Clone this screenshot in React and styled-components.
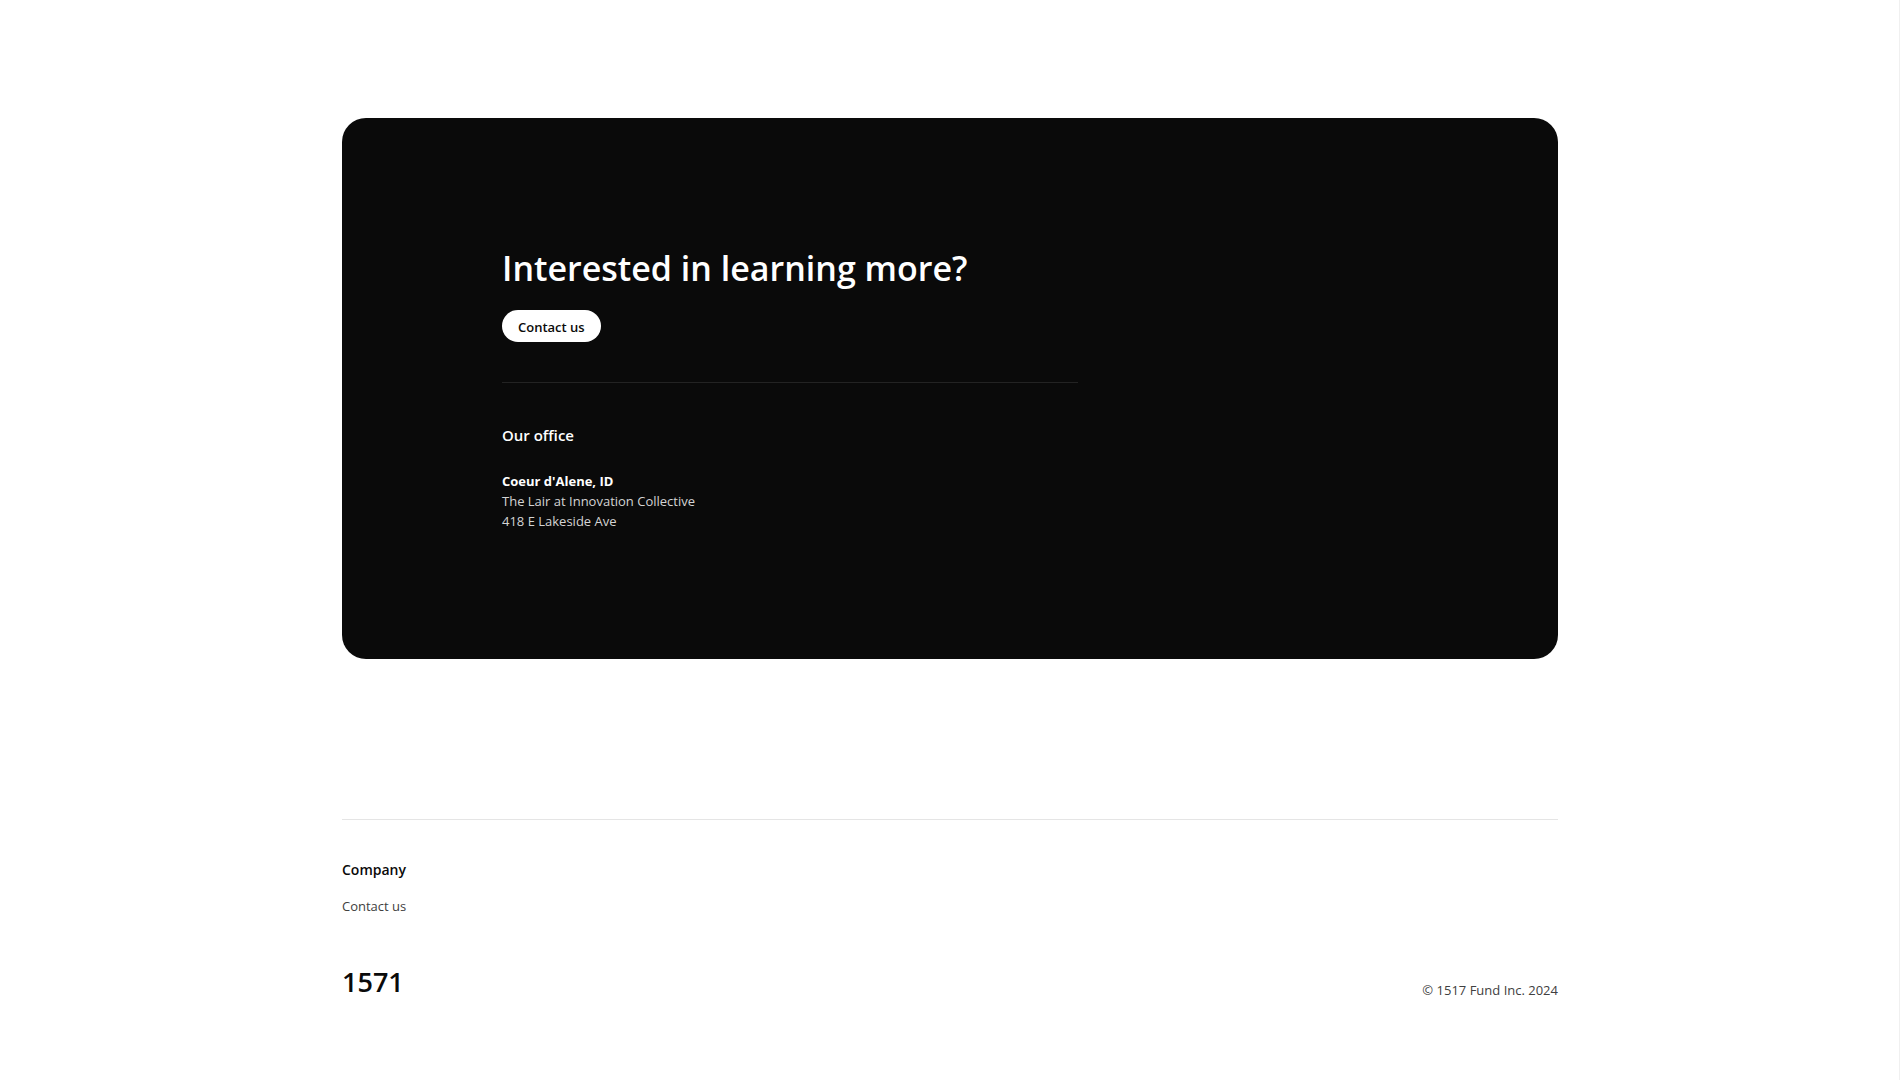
import React from "react";
import styled, { createGlobalStyle } from "styled-components";

const GlobalStyle = createGlobalStyle`
  *, *::before, *::after { box-sizing: border-box; }
  body {
    margin: 0;
    background: #fff;
    color: #0a0a0a;
    font-family: "Segoe UI", "Open Sans", "Noto Sans", sans-serif;
    font-size: 13px;
    line-height: 20px;
  }
  h2, h3, p, ul, address { margin: 0; }
`;

const Page = styled.div`
  min-height: 100vh;
  padding-top: 118px;
  box-shadow: inset -1px 0 #f0f0f0;
`;

const Container = styled.div`
  max-width: 1280px;
  margin: 0 auto;
  padding: 0 32px;
`;

const ContactCard = styled.section`
  padding: 128px 32px;
  border-radius: 24px;
  background: #0a0a0a;
  color: #fff;
`;

const CardInner = styled.div`
  max-width: 896px;
  margin: 0 auto;
`;

const CardContent = styled.div`
  max-width: 576px;
`;

const Title = styled.h2`
  font-size: 34px;
  font-weight: 600;
  line-height: 44px;
`;

const PillButton = styled.button`
  display: block;
  height: 32px;
  margin-top: 20px;
  padding: 2px 16px 0;
  border: 0;
  border-radius: 16px;
  background: #fff;
  color: #0a0a0a;
  font: inherit;
  font-weight: 600;
  cursor: pointer;
`;

const Office = styled.div`
  margin-top: 40px;
  padding-top: 40px;
  border-top: 1px solid #232323;
`;

const OfficeTitle = styled.h3`
  font-size: 15px;
  font-weight: 600;
  line-height: 24px;
`;

const Address = styled.address`
  margin-top: 24px;
  color: #d4d4d4;
  font-style: normal;

  strong {
    display: block;
    color: #fff;
    font-weight: 700;
  }
`;

const Footer = styled.footer`
  margin-top: 160px;
  padding: 40px 0 64px;
  border-top: 1px solid #e5e5e5;
`;

const FooterTitle = styled.h3`
  font-size: 14px;
  font-weight: 600;
  line-height: 20px;
`;

const LinkList = styled.ul`
  margin-top: 16px;
  padding: 0;
  list-style: none;
`;

const FooterLink = styled.a`
  color: #404040;
  text-decoration: none;
`;

const FooterBottom = styled.div`
  display: flex;
  align-items: flex-end;
  justify-content: space-between;
  margin-top: 48px;
`;

const Logo = styled.a`
  color: #0a0a0a;
  font-size: 27px;
  font-weight: 600;
  line-height: 36px;
  text-decoration: none;
`;

const Copyright = styled.p`
  color: #404040;
`;

export default function App() {
  return (
    <>
      <GlobalStyle />
      <Page>
        <Container>
          <ContactCard>
            <CardInner>
              <CardContent>
                <Title>Interested in learning more?</Title>
                <PillButton type="button">Contact us</PillButton>
                <Office>
                  <OfficeTitle>Our office</OfficeTitle>
                  <Address>
                    <strong>Coeur d'Alene, ID</strong>
                    The Lair at Innovation Collective
                    <br />
                    418 E Lakeside Ave
                  </Address>
                </Office>
              </CardContent>
            </CardInner>
          </ContactCard>
          <Footer>
            <FooterTitle>Company</FooterTitle>
            <LinkList>
              <li>
                <FooterLink href="#contact">Contact us</FooterLink>
              </li>
            </LinkList>
            <FooterBottom>
              <Logo href="#home">1571</Logo>
              <Copyright>© 1517 Fund Inc. 2024</Copyright>
            </FooterBottom>
          </Footer>
        </Container>
      </Page>
    </>
  );
}
